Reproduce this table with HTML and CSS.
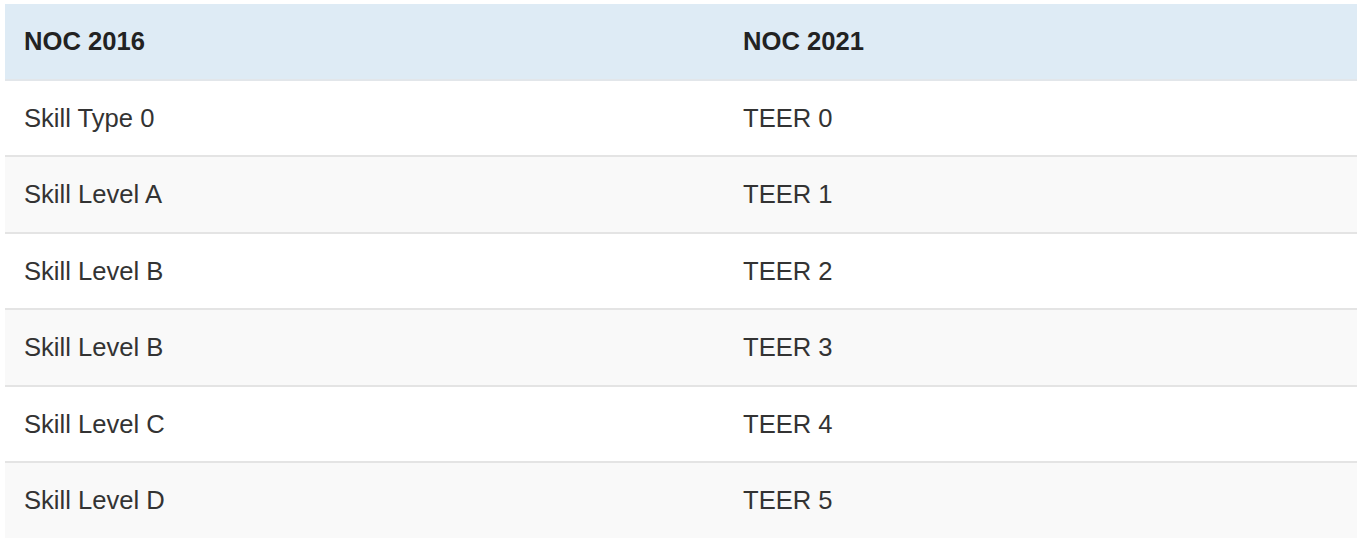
FILE: index.html
```html
<!DOCTYPE html>
<html lang="en">
<head>
<meta charset="utf-8">
<title>NOC 2016 vs NOC 2021</title>
<link rel="stylesheet" href="styles.css">
</head>
<body>
<table class="noc-table">
  <colgroup>
    <col class="col-first">
    <col class="col-second">
  </colgroup>
  <thead>
    <tr><th>NOC 2016</th><th>NOC 2021</th></tr>
  </thead>
  <tbody>
    <tr><td>Skill Type 0</td><td>TEER 0</td></tr>
    <tr><td>Skill Level A</td><td>TEER 1</td></tr>
    <tr><td>Skill Level B</td><td>TEER 2</td></tr>
    <tr><td>Skill Level B</td><td>TEER 3</td></tr>
    <tr><td>Skill Level C</td><td>TEER 4</td></tr>
    <tr><td>Skill Level D</td><td>TEER 5</td></tr>
  </tbody>
</table>
</body>
</html>
```

FILE: styles.css
```css
html, body {
  margin: 0;
  padding: 0;
  background: #ffffff;
}

body {
  padding: 4px 5px 0 5px;
  font-family: "Liberation Sans", Arial, sans-serif;
  color: #333333;
}

.noc-table {
  width: 1352px;
  border-collapse: collapse;
  border-spacing: 0;
  table-layout: fixed;
  font-size: 25.6px;
  line-height: 36.5px;
}

.col-first {
  width: 719px;
}

.noc-table th,
.noc-table td {
  text-align: left;
  vertical-align: middle;
  padding: 19px 19px 19px 19px;
}

.noc-table thead th {
  background: #deebf5;
  color: #222222;
  font-weight: bold;
  border-bottom: 2px solid #e2e6ea;
  height: 35px;
}

.noc-table tbody td {
  border-top: 2px solid #e4e4e4;
  height: 36.5px;
}

.noc-table tbody tr:first-child td {
  border-top: none;
}

.noc-table tbody tr:nth-child(even) td {
  background: #f9f9f9;
}
```
